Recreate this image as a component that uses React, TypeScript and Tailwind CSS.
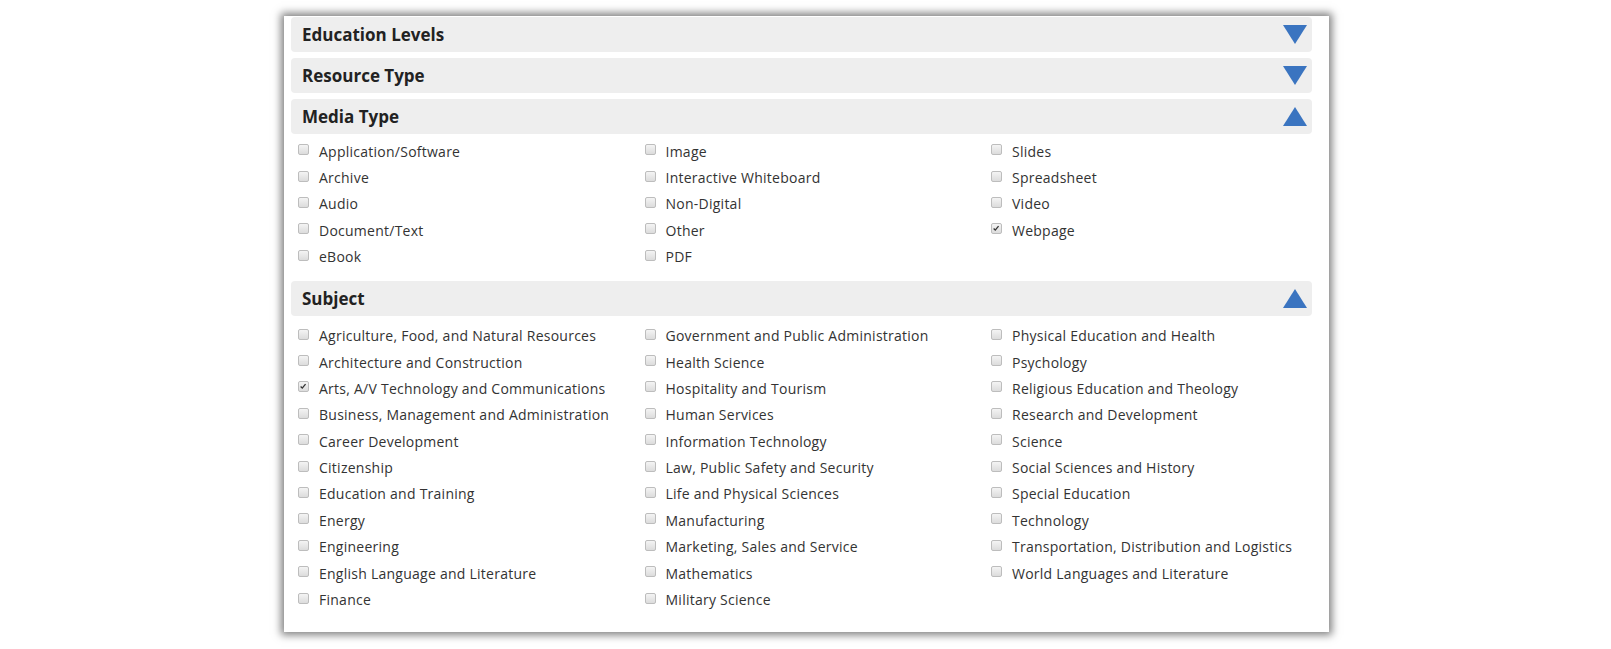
const mediaTypes = [
  ["Application/Software", "Image", "Slides"],
  ["Archive", "Interactive Whiteboard", "Spreadsheet"],
  ["Audio", "Non-Digital", "Video"],
  ["Document/Text", "Other", "Webpage"],
  ["eBook", "PDF", ""],
];

const subjects = [
  ["Agriculture, Food, and Natural Resources", "Government and Public Administration", "Physical Education and Health"],
  ["Architecture and Construction", "Health Science", "Psychology"],
  ["Arts, A/V Technology and Communications", "Hospitality and Tourism", "Religious Education and Theology"],
  ["Business, Management and Administration", "Human Services", "Research and Development"],
  ["Career Development", "Information Technology", "Science"],
  ["Citizenship", "Law, Public Safety and Security", "Social Sciences and History"],
  ["Education and Training", "Life and Physical Sciences", "Special Education"],
  ["Energy", "Manufacturing", "Technology"],
  ["Engineering", "Marketing, Sales and Service", "Transportation, Distribution and Logistics"],
  ["English Language and Literature", "Mathematics", "World Languages and Literature"],
  ["Finance", "Military Science", ""],
];

const checked = ["Webpage", "Arts, A/V Technology and Communications"];

function Arrow({ up }: { up?: boolean }) {
  return (
    <svg width="24" height="19" viewBox="0 0 24 19" className="mr-[5px]">
      {up ? (
        <polygon points="12,0 24,19 0,19" fill="#3a74c0" />
      ) : (
        <polygon points="0,0 24,0 12,19" fill="#3a74c0" />
      )}
    </svg>
  );
}

function Header({ title, open }: { title: string; open?: boolean }) {
  return (
    <div className="flex items-center justify-between h-[35px] bg-[#eeeeee] rounded-[4px] pl-[11px]">
      <span className="text-[17px] font-bold text-[#222]">{title}</span>
      <Arrow up={open} />
    </div>
  );
}

function Box({ on }: { on: boolean }) {
  return (
    <span className="relative w-[11px] h-[11px] rounded-[2px] border border-[#bdbdbd] bg-gradient-to-b from-[#f4f4f4] to-[#dcdcdc] mb-[3px] shrink-0">
      {on && (
        <svg viewBox="0 0 11 11" className="absolute inset-0 w-[9px] h-[9px]">
          <path d="M2 5.5 L4 7.5 L8 2.5" stroke="#333" strokeWidth="1.6" fill="none" />
        </svg>
      )}
    </span>
  );
}

function Options({ rows }: { rows: string[][] }) {
  return (
    <div className="grid grid-cols-[346.5px_346.5px_1fr] pl-[7px]">
      {rows.flatMap((r) =>
        r.map((label, i) => (
          <div key={label + i} className="h-[26.4px] flex items-center">
            {label && (
              <>
                <Box on={checked.includes(label)} />
                <span className="ml-[10px] text-[14px] text-[#333] tracking-[0.25px]">{label}</span>
              </>
            )}
          </div>
        ))
      )}
    </div>
  );
}

export default function App() {
  return (
    <div className="min-h-screen bg-white pt-[16px] pl-[284px]" style={{ fontFamily: '"Open Sans", sans-serif' }}>
      <div className="w-[1045px] h-[616px] bg-white shadow-[0_0_8px_3px_rgba(0,0,0,0.5)] pl-[7px] pr-[17px] pt-[1px]">
        <div className="flex flex-col gap-[6px]">
          <Header title="Education Levels" />
          <Header title="Resource Type" />
          <Header title="Media Type" open />
        </div>
        <div className="pt-[4px] pb-[11.5px]">
          <Options rows={mediaTypes} />
        </div>
        <Header title="Subject" open />
        <div className="pt-[6px]">
          <Options rows={subjects} />
        </div>
      </div>
    </div>
  );
}
